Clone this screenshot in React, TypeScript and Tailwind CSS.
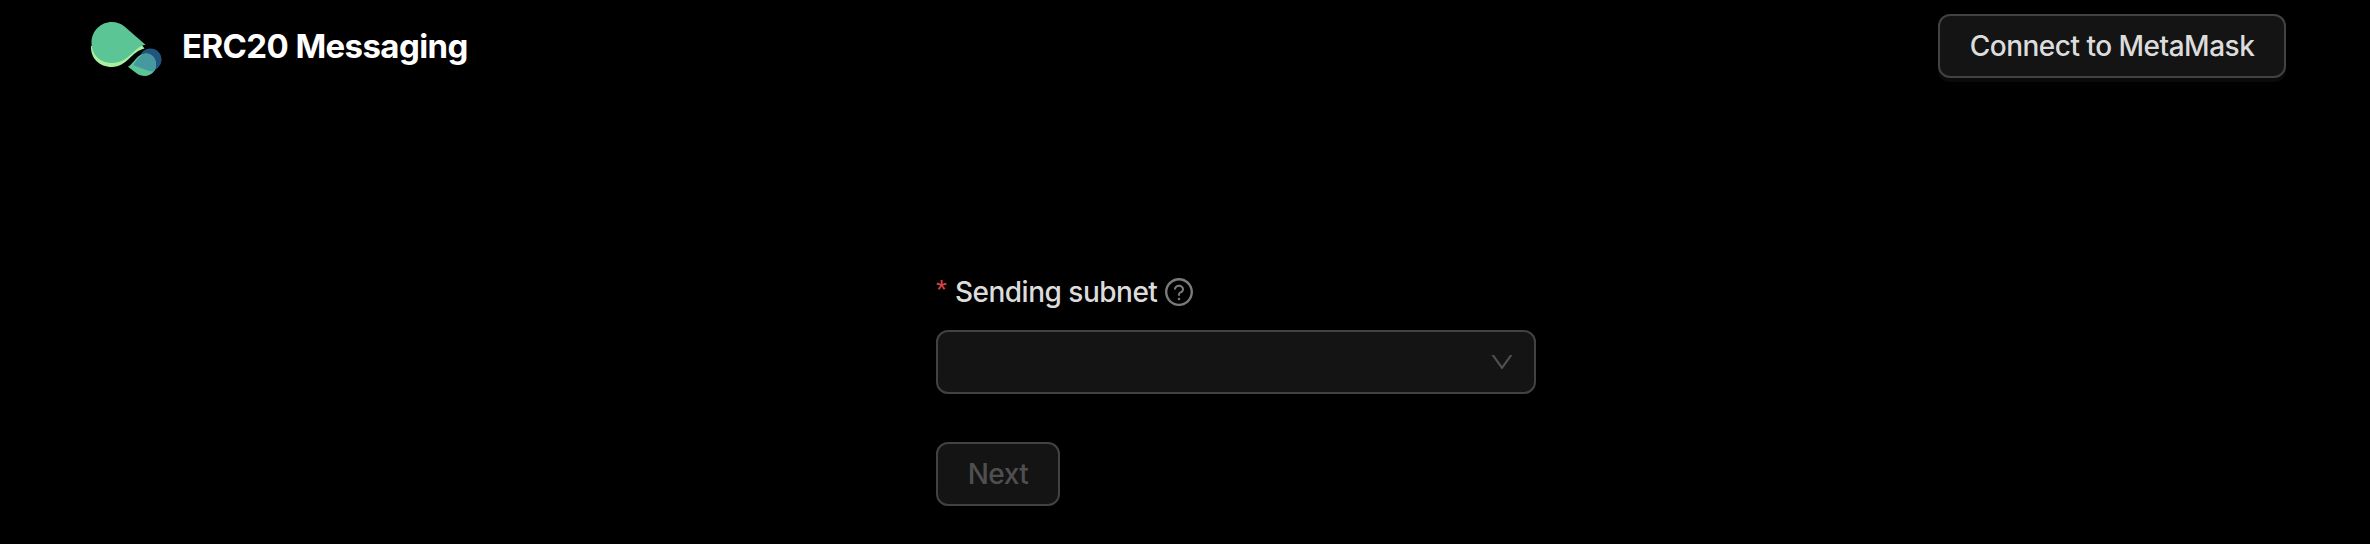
import { AiOutlineDown, AiOutlineQuestionCircle } from "react-icons/ai";

function Logo() {
  return (
    <svg viewBox="0 0 100 75" className="mt-[3px] h-[75px] w-[100px] shrink-0" aria-hidden="true">
      <path d="M11 36C10.500 48 19 57 32 57C47 57 51 41.500 64.500 38.500L60 33Z" fill="#abf0a0" />
      <path
        d="M32 12C36.500 12 41 13.500 44.500 16.500L65.500 34.700C54 36.500 49 53 32 53C20 53 11.500 44.500 11.500 33C11.500 21 20.500 12 32 12Z"
        fill="#5bc596"
      />
      <circle cx="70.500" cy="49.500" r="11" fill="#20557d" />
      <path
        d="M48 56.700C55 52.500 57 43.500 66 43.500C72 43.500 76 48.500 76 54.500C76 61 71 66 65 66C61.500 66 59 65 56.500 63.300Z"
        fill="#5bc596"
      />
      <path
        d="M60.800 46C62.500 44.300 64.200 43.500 66 43.500C72 43.500 76 48.500 76 54.500C76 57 75.500 59.500 74.500 61C72 61.500 69 61.300 66 60L53.500 55.200C55 52 58 48.500 60.800 46Z"
        fill="#469a9f"
      />
    </svg>
  );
}

export default function App() {
  return (
    <div className="h-[544px] w-full overflow-hidden bg-black font-['Inter',sans-serif] text-[28px] font-[450] tracking-[-0.5px] text-[#dcdcdc]">
      <header className="flex h-[92px] items-center justify-between pr-[84px] pl-20">
        <div className="flex items-center">
          <Logo />
          <h1 className="ml-0.5 text-[33px] leading-[48px] font-bold tracking-[-0.6px] whitespace-nowrap text-white">
            ERC20 Messaging
          </h1>
        </div>
        <button className="h-16 w-[348px] rounded-xl border-2 border-[#424242] bg-[#141414] leading-[44px] whitespace-nowrap shadow-[0_4px_0_rgba(255,255,255,0.04)]">
          Connect to MetaMask
        </button>
      </header>
      <main className="ml-[936px] w-[600px] pt-[178px]">
        <label className="flex h-11 items-center whitespace-nowrap">
          <span className="mr-2 mb-1 font-['Liberation_Sans',sans-serif] tracking-normal text-[#dc4446]">*</span>
          <span>Sending subnet</span>
          <AiOutlineQuestionCircle className="ml-1.5 size-8 text-[#7b7b7b]" />
        </label>
        <div className="mt-4 flex h-16 items-center justify-end rounded-xl border-2 border-[#424242] bg-[#141414] pr-[18px]">
          <AiOutlineDown className="size-7 text-[#505050]" />
        </div>
        <button disabled className="mt-12 h-16 w-[124px] rounded-xl border-2 border-[#424242] bg-[#141414] leading-[44px] text-[#4f4f4f]">
          Next
        </button>
      </main>
    </div>
  );
}
